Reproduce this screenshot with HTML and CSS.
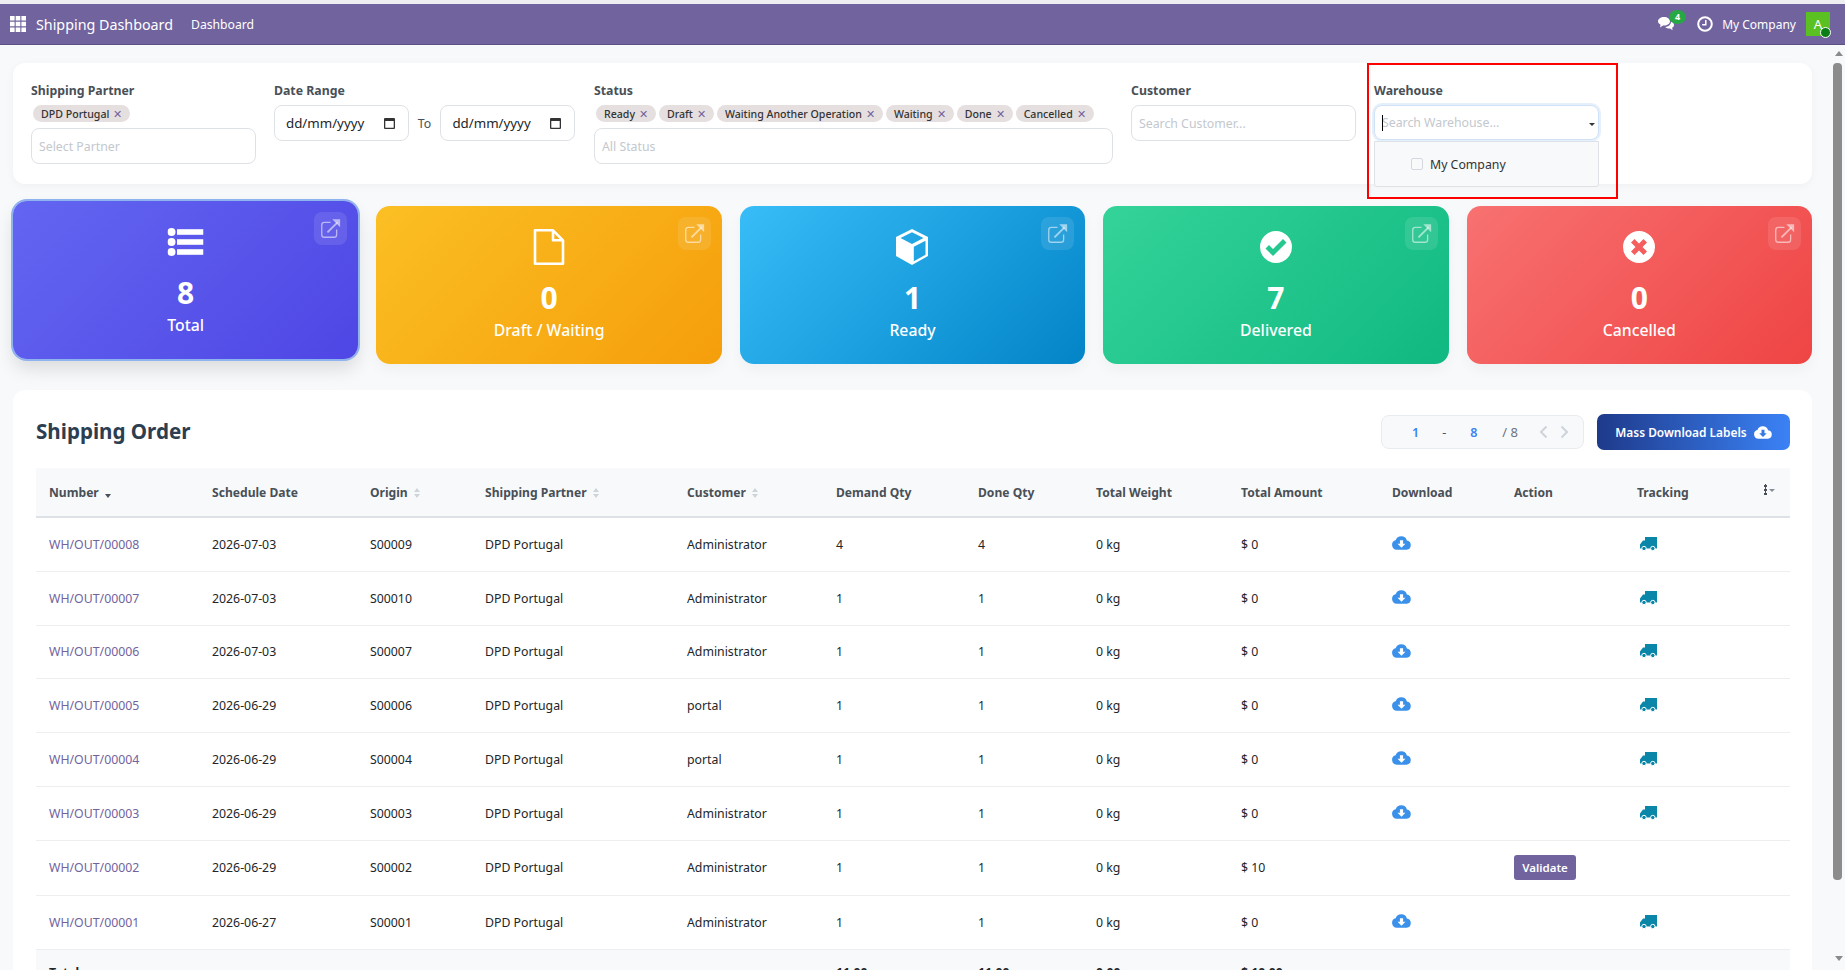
FILE: index.html
```html
<!DOCTYPE html>
<html lang="en">
<head>
    <meta charset="UTF-8">
    <title>Shipping Dashboard</title>
    <link rel="stylesheet" href="styles.css">
</head>
<body>

<svg class="sprite" aria-hidden="true">
    <symbol id="i-ext" viewBox="0 0 24 24"><path d="M19 13v6a3 3 0 0 1-3 3H5a3 3 0 0 1-3-3V8a3 3 0 0 1 3-3h7" fill="none" stroke="currentColor" stroke-width="1.500"/><path d="M8.500 16.500L20 5" fill="none" stroke="currentColor" stroke-width="2.200"/><path d="M14 1.500h9v9z" fill="currentColor"/></symbol>
    <symbol id="i-list" viewBox="0 0 36 28"><circle cx="4" cy="4" r="4"/><circle cx="4" cy="14" r="4"/><circle cx="4" cy="24" r="4"/><rect x="9.500" y="1.200" width="26.500" height="5.600"/><rect x="9.500" y="11.200" width="26.500" height="5.600"/><rect x="9.500" y="21.200" width="26.500" height="5.600"/></symbol>
    <symbol id="i-file" viewBox="0 0 32 36"><path d="M2 1.300h18l10 10v23.400H2zM20 1.300v10h10" fill="none" stroke="currentColor" stroke-width="2.600" stroke-linejoin="round"/></symbol>
    <symbol id="i-cube" viewBox="0 0 34 36"><path fill-rule="evenodd" d="M17 0l16 8v19l-16 9-16-9V8zM17 3.200L5.500 9 17 15l11.500-6zM18.800 17.800v14.500l11.700-6.600V11.700z"/></symbol>
    <symbol id="i-check" viewBox="0 0 32 32"><path fill-rule="evenodd" d="M16 0a16 16 0 1 0 0 32a16 16 0 1 0 0-32zM13 25l-7.500-7.500L9 14l4 4L23 8l3.500 3.500z"/></symbol>
    <symbol id="i-times" viewBox="0 0 32 32"><path fill-rule="evenodd" d="M16 0a16 16 0 1 0 0 32a16 16 0 1 0 0-32zM16 12.500L20.500 8l3.500 3.500-4.500 4.500 4.500 4.500-3.500 3.500-4.500-4.500-4.500 4.500L8 20.500l4.500-4.500L8 11.500 11.500 8z"/></symbol>
    <symbol id="i-cloud" viewBox="0 0 24 18"><path fill-rule="evenodd" d="M6 18A6 6 0 0 1 4.600 6.200 7.500 7.500 0 0 1 18.800 6.500 5.800 5.800 0 0 1 18.500 18zM10 6v4.500H7l5 5 5-5h-3V6z"/></symbol>
    <symbol id="i-truck" viewBox="0 0 17 14"><path d="M5 0h12v11.500H5zM0 11.500V7.500L3 3.500h2v8z"/><circle cx="4" cy="11.500" r="2.200" stroke="#fff" stroke-width="1"/><circle cx="12.800" cy="11.500" r="2.200" stroke="#fff" stroke-width="1"/></symbol>
</svg>

<div class="top-strip"></div>

<header class="navbar">
    <svg class="apps" width="16" height="16" viewBox="0 0 16 16"><path d="M0 0h4.600v4.600H0zM5.700 0h4.600v4.600H5.700zM11.400 0H16v4.600h-4.600zM0 5.700h4.600v4.600H0zM5.700 5.700h4.600v4.600H5.700zM11.400 5.700H16v4.600h-4.600zM0 11.400h4.600V16H0zM5.700 11.400h4.600V16H5.700zM11.400 11.400H16V16h-4.600z"/></svg>
    <span class="brand">Shipping Dashboard</span>
    <a class="nav-link">Dashboard</a>
    <div class="nav-right">
        <span class="msgs">
            <svg width="16" height="14" viewBox="0 0 16 14"><path d="M6 0c3.300 0 6 1.900 6 4.300S9.300 8.600 6 8.600l-1-.1L2 10.500l.6-2.800C1 7 0 5.700 0 4.300 0 1.900 2.700 0 6 0z"/><path d="M13 4.500c1.800.6 3 1.900 3 3.400 0 1.200-.7 2.200-1.900 2.900l.5 2.400-2.500-1.700c-2 .1-3.800-.5-4.800-1.600 3 0 5.700-2.200 5.700-5.400z"/></svg>
            <b class="msgs-count">4</b>
        </span>
        <svg class="clock" width="16" height="16" viewBox="0 0 16 16"><circle cx="8" cy="8" r="6.800" fill="none" stroke="#fff" stroke-width="2"/><path d="M8.800 4v4.800H5.200" fill="none" stroke="#fff" stroke-width="1.500"/></svg>
        <span class="company">My Company</span>
        <span class="avatar">A<i class="avatar-dot"></i></span>
    </div>
</header>

<div class="page">
    <main class="content">

        <section class="filters">
            <div class="field field-partner">
                <label>Shipping Partner</label>
                <div class="tags">
                    <span class="tag">DPD Portugal <i>&#10005;</i></span>
                </div>
                <input type="text" placeholder="Select Partner">
            </div>
            <div class="field field-date">
                <label>Date Range</label>
                <div class="date-row">
                    <div class="date-box">dd/mm/yyyy
                        <svg width="11" height="12" viewBox="0 0 11 12"><path fill-rule="evenodd" d="M1 1h9a1 1 0 0 1 1 1v9a1 1 0 0 1-1 1H1a1 1 0 0 1-1-1V2a1 1 0 0 1 1-1zM1.300 4v6.700h8.400V4z"/></svg>
                    </div>
                    <span class="to">To</span>
                    <div class="date-box">dd/mm/yyyy
                        <svg width="11" height="12" viewBox="0 0 11 12"><path fill-rule="evenodd" d="M1 1h9a1 1 0 0 1 1 1v9a1 1 0 0 1-1 1H1a1 1 0 0 1-1-1V2a1 1 0 0 1 1-1zM1.300 4v6.700h8.400V4z"/></svg>
                    </div>
                </div>
            </div>
            <div class="field field-status">
                <label>Status</label>
                <div class="tags">
                    <span class="tag">Ready <i>&#10005;</i></span>
                    <span class="tag">Draft <i>&#10005;</i></span>
                    <span class="tag">Waiting Another Operation <i>&#10005;</i></span>
                    <span class="tag">Waiting <i>&#10005;</i></span>
                    <span class="tag">Done <i>&#10005;</i></span>
                    <span class="tag">Cancelled <i>&#10005;</i></span>
                </div>
                <input type="text" placeholder="All Status">
            </div>
            <div class="field">
                <label>Customer</label>
                <input type="text" placeholder="Search Customer...">
            </div>
            <div class="field field-warehouse">
                <label>Warehouse</label>
                <div class="wh-input">
                    <i class="caret-line"></i>
                    <input type="text" placeholder="Search Warehouse...">
                    <i class="wh-arrow"></i>
                </div>
                <div class="wh-menu">
                    <span class="check"></span>
                    <span>My Company</span>
                </div>
                <div class="red-box"></div>
            </div>
        </section>

        <section class="stats">
            <div class="stat stat-total">
                <span class="stat-link"><svg width="21" height="21"><use href="#i-ext"/></svg></span>
                <svg class="stat-icon" width="37" height="36" viewBox="0 -4 36 36"><use href="#i-list" width="36" height="28" y="0"/></svg>
                <div class="stat-num">8</div>
                <div class="stat-label">Total</div>
            </div>
            <div class="stat stat-draft">
                <span class="stat-link"><svg width="21" height="21"><use href="#i-ext"/></svg></span>
                <svg class="stat-icon" width="32" height="36"><use href="#i-file"/></svg>
                <div class="stat-num">0</div>
                <div class="stat-label">Draft / Waiting</div>
            </div>
            <div class="stat stat-ready">
                <span class="stat-link"><svg width="21" height="21"><use href="#i-ext"/></svg></span>
                <svg class="stat-icon" width="34" height="36"><use href="#i-cube"/></svg>
                <div class="stat-num">1</div>
                <div class="stat-label">Ready</div>
            </div>
            <div class="stat stat-done">
                <span class="stat-link"><svg width="21" height="21"><use href="#i-ext"/></svg></span>
                <svg class="stat-icon icon-round" width="32" height="32"><use href="#i-check"/></svg>
                <div class="stat-num">7</div>
                <div class="stat-label">Delivered</div>
            </div>
            <div class="stat stat-cancel">
                <span class="stat-link"><svg width="21" height="21"><use href="#i-ext"/></svg></span>
                <svg class="stat-icon icon-round" width="32" height="32"><use href="#i-times"/></svg>
                <div class="stat-num">0</div>
                <div class="stat-label">Cancelled</div>
            </div>
        </section>

        <section class="orders">
            <div class="orders-top">
                <h2>Shipping Order</h2>
                <div class="pager">
                    <span class="pg-num pg-a">1</span>
                    <span class="pg-dash">-</span>
                    <span class="pg-num pg-b">8</span>
                    <span class="pg-total">/ 8</span>
                    <span class="pg-arrows">
                        <svg width="9" height="14" viewBox="0 0 9 14"><path d="M7.500 1.500L2 7l5.500 5.500" fill="none" stroke="#ced4da" stroke-width="2"/></svg>
                        <svg width="9" height="14" viewBox="0 0 9 14"><path d="M1.500 1.500L7 7l-5.500 5.500" fill="none" stroke="#ced4da" stroke-width="2"/></svg>
                    </span>
                </div>
                <button class="mass-btn">Mass Download Labels
                    <svg width="18" height="14"><use href="#i-cloud"/></svg>
                </button>
            </div>

            <table class="orders-table">
                <colgroup>
                    <col class="c-number"><col class="c-date"><col class="c-origin"><col class="c-partner">
                    <col class="c-customer"><col class="c-demand"><col class="c-done"><col class="c-weight">
                    <col class="c-amount"><col class="c-download"><col class="c-action"><col class="c-tracking"><col>
                </colgroup>
                <thead>
                    <tr>
                        <th>Number <i class="sort-down"></i></th>
                        <th>Schedule Date</th>
                        <th>Origin <i class="sort"></i></th>
                        <th>Shipping Partner <i class="sort"></i></th>
                        <th>Customer <i class="sort"></i></th>
                        <th>Demand Qty</th>
                        <th>Done Qty</th>
                        <th>Total Weight</th>
                        <th>Total Amount</th>
                        <th>Download</th>
                        <th>Action</th>
                        <th>Tracking</th>
                        <th class="opt"><span class="opt-dots"></span><i class="opt-caret"></i></th>
                    </tr>
                </thead>
                <tbody>
                    <tr>
                        <td><a>WH/OUT/00008</a></td><td>2026-07-03</td><td>S00009</td><td>DPD Portugal</td><td>Administrator</td><td>4</td><td>4</td><td>0 kg</td><td>$ 0</td>
                        <td><svg class="dl" width="19" height="15"><use href="#i-cloud"/></svg></td><td></td>
                        <td><svg class="trk" width="17" height="14"><use href="#i-truck"/></svg></td><td></td>
                    </tr>
                    <tr>
                        <td><a>WH/OUT/00007</a></td><td>2026-07-03</td><td>S00010</td><td>DPD Portugal</td><td>Administrator</td><td>1</td><td>1</td><td>0 kg</td><td>$ 0</td>
                        <td><svg class="dl" width="19" height="15"><use href="#i-cloud"/></svg></td><td></td>
                        <td><svg class="trk" width="17" height="14"><use href="#i-truck"/></svg></td><td></td>
                    </tr>
                    <tr class="row-short">
                        <td><a>WH/OUT/00006</a></td><td>2026-07-03</td><td>S00007</td><td>DPD Portugal</td><td>Administrator</td><td>1</td><td>1</td><td>0 kg</td><td>$ 0</td>
                        <td><svg class="dl" width="19" height="15"><use href="#i-cloud"/></svg></td><td></td>
                        <td><svg class="trk" width="17" height="14"><use href="#i-truck"/></svg></td><td></td>
                    </tr>
                    <tr>
                        <td><a>WH/OUT/00005</a></td><td>2026-06-29</td><td>S00006</td><td>DPD Portugal</td><td>portal</td><td>1</td><td>1</td><td>0 kg</td><td>$ 0</td>
                        <td><svg class="dl" width="19" height="15"><use href="#i-cloud"/></svg></td><td></td>
                        <td><svg class="trk" width="17" height="14"><use href="#i-truck"/></svg></td><td></td>
                    </tr>
                    <tr>
                        <td><a>WH/OUT/00004</a></td><td>2026-06-29</td><td>S00004</td><td>DPD Portugal</td><td>portal</td><td>1</td><td>1</td><td>0 kg</td><td>$ 0</td>
                        <td><svg class="dl" width="19" height="15"><use href="#i-cloud"/></svg></td><td></td>
                        <td><svg class="trk" width="17" height="14"><use href="#i-truck"/></svg></td><td></td>
                    </tr>
                    <tr>
                        <td><a>WH/OUT/00003</a></td><td>2026-06-29</td><td>S00003</td><td>DPD Portugal</td><td>Administrator</td><td>1</td><td>1</td><td>0 kg</td><td>$ 0</td>
                        <td><svg class="dl" width="19" height="15"><use href="#i-cloud"/></svg></td><td></td>
                        <td><svg class="trk" width="17" height="14"><use href="#i-truck"/></svg></td><td></td>
                    </tr>
                    <tr class="row-validate">
                        <td><a>WH/OUT/00002</a></td><td>2026-06-29</td><td>S00002</td><td>DPD Portugal</td><td>Administrator</td><td>1</td><td>1</td><td>0 kg</td><td>$ 10</td>
                        <td></td><td><button class="validate">Validate</button></td>
                        <td></td><td></td>
                    </tr>
                    <tr>
                        <td><a>WH/OUT/00001</a></td><td>2026-06-27</td><td>S00001</td><td>DPD Portugal</td><td>Administrator</td><td>1</td><td>1</td><td>0 kg</td><td>$ 0</td>
                        <td><svg class="dl" width="19" height="15"><use href="#i-cloud"/></svg></td><td></td>
                        <td><svg class="trk" width="17" height="14"><use href="#i-truck"/></svg></td><td></td>
                    </tr>
                </tbody>
                <tfoot>
                    <tr>
                        <td>Total</td><td></td><td></td><td></td><td></td><td>11.00</td><td>11.00</td><td>0.00</td><td>$ 10.00</td><td></td><td></td><td></td><td></td>
                    </tr>
                </tfoot>
            </table>
        </section>
    </main>

    <aside class="scrollbar">
        <i class="sb-up"></i>
        <div class="sb-thumb"></div>
        <i class="sb-down"></i>
    </aside>
</div>

</body>
</html>
```
FILE: styles.css
```css
* {
    box-sizing: border-box;
}
html, body {
    height: 100%;
}
body {
    margin: 0;
    overflow: hidden;
    display: flex;
    flex-direction: column;
    font-family: "Noto Sans", sans-serif;
    font-size: 12.3px;
    color: #212529;
    background: #f8f9fa;
}
.sprite {
    display: none;
}
.top-strip {
    height: 4px;
    background: #eeeef2;
}

/* navbar */
.navbar {
    height: 41px;
    flex-shrink: 0;
    display: flex;
    align-items: center;
    padding-left: 10px;
    background: #71639e;
    border-bottom: 1px solid #5d5285;
    color: #fff;
}
.apps {
    fill: #fff;
}
.brand {
    margin-left: 10px;
    font-size: 14.3px;
}
.nav-link {
    margin-left: 18px;
    font-size: 12.2px;
}
.nav-right {
    margin-left: auto;
    display: flex;
    align-items: center;
    padding-right: 15px;
}
.msgs {
    position: relative;
    display: flex;
    margin-right: 23px;
}
.msgs svg {
    fill: #fff;
}
.msgs-count {
    position: absolute;
    left: 11px;
    top: -7px;
    width: 17px;
    height: 14px;
    border-radius: 50%;
    background: #28a745;
    font-size: 9px;
    line-height: 14px;
    text-align: center;
}
.clock {
    margin-right: 9px;
}
.company {
    font-size: 12px;
    margin-right: 10px;
}
.avatar {
    position: relative;
    width: 24px;
    height: 24px;
    background: #5bc122;
    text-align: center;
    line-height: 24px;
    font-size: 13px;
}
.avatar-dot {
    position: absolute;
    right: -1px;
    bottom: -2px;
    width: 11px;
    height: 11px;
    border-radius: 50%;
    background: #0a7d16;
    border: 1px solid #fff;
}

/* page */
.page {
    flex: 1;
    min-height: 0;
    display: flex;
}
.content {
    flex: 1;
    min-width: 0;
    overflow: hidden;
    padding: 18px 20px 0 13px;
}
.scrollbar {
    width: 13px;
    flex-shrink: 0;
    display: flex;
    flex-direction: column;
    align-items: center;
    padding-top: 6px;
    background: #f8f9fa;
}
.sb-up, .sb-down {
    width: 0;
    height: 0;
    border-left: 4px solid transparent;
    border-right: 4px solid transparent;
}
.sb-up {
    border-bottom: 5px solid #8a8a8a;
}
.sb-down {
    margin-top: 76px;
    border-top: 5px solid #8a8a8a;
}
.sb-thumb {
    width: 9px;
    height: 817px;
    margin-top: 7px;
    margin-right: 3px;
    border-radius: 4px;
    background: #8c8c8c;
}

/* filters */
.filters {
    display: flex;
    gap: 18px;
    height: 121px;
    padding: 18px;
    background: #fff;
    border-radius: 12px;
    box-shadow: 0 2px 8px rgba(0,0,0,0.04);
}
.field {
    position: relative;
    width: 225px;
    flex-shrink: 0;
}
.field label {
    display: block;
    height: 18px;
    margin-bottom: 6px;
    font-size: 12.3px;
    line-height: 20px;
    font-weight: 700;
    color: #495057;
}
.field input {
    display: block;
    width: 100%;
    height: 36px;
    padding: 0 7px;
    border: 1px solid #dee2e6;
    border-radius: 8px;
    background: #fff;
    font-family: inherit;
    font-size: 12.3px;
    outline: none;
}
.field input::placeholder {
    color: #c3c8ce;
    opacity: 1;
}
.field-date {
    width: 301px;
}
.field-status {
    width: 519px;
    margin-left: 1px;
}
.tags {
    display: flex;
    gap: 3px;
    height: 17px;
    margin: 3px 0 6px 2px;
}
.tag {
    display: flex;
    align-items: center;
    gap: 4px;
    height: 17px;
    padding: 0 8px;
    border-radius: 9px;
    background: #e6dfdf;
    font-size: 10.6px;
    font-weight: 500;
    color: #333;
    white-space: nowrap;
}
.tag i {
    font-style: normal;
    font-size: 11px;
    color: #71639e;
}
.date-row {
    display: flex;
    align-items: center;
}
.date-box {
    width: 135px;
    height: 36px;
    display: flex;
    align-items: center;
    justify-content: space-between;
    padding: 0 13px 0 11px;
    border: 1px solid #dee2e6;
    border-radius: 8px;
    font-size: 13.3px;
}
.date-box svg {
    fill: #333;
}
.to {
    width: 32px;
    text-align: center;
    color: #495057;
}
.wh-input {
    position: relative;
}
.wh-input input {
    height: 35px;
    border-color: #cfe2f7;
    box-shadow: 0 0 0 2px #e6f0fb;
}
.caret-line {
    position: absolute;
    left: 8px;
    top: 10px;
    width: 1px;
    height: 16px;
    background: #000;
}
.wh-arrow {
    position: absolute;
    right: 4px;
    top: 18px;
    width: 0;
    height: 0;
    border-left: 3px solid transparent;
    border-right: 3px solid transparent;
    border-top: 3px solid #333;
}
.wh-menu {
    position: absolute;
    top: 60px;
    left: 0;
    right: 0;
    height: 46px;
    display: flex;
    align-items: center;
    gap: 7px;
    padding-left: 36px;
    background: #f8f9fa;
    border: 1px solid #dee2e6;
    border-radius: 0 0 3px 3px;
    z-index: 2;
    font-size: 12.3px;
    color: #333;
}
.check {
    width: 12px;
    height: 12px;
    border: 1px solid #d5d9de;
    border-radius: 2px;
    background: #f8f9fa;
}
.red-box {
    position: absolute;
    left: -7px;
    top: -18px;
    width: 251px;
    height: 136px;
    border: 2px solid #f00;
    z-index: 3;
}

/* stat cards */
.stats {
    display: grid;
    grid-template-columns: repeat(5, 1fr);
    gap: 18px;
    margin-top: 22px;
}
.stat {
    position: relative;
    height: 158px;
    padding-top: 23px;
    border-radius: 14px;
    text-align: center;
    color: #fff;
    box-shadow: 0 6px 14px rgba(0,0,0,0.04);
}
.stat-total {
    transform: translateY(-5px);
    background: linear-gradient(135deg, #6366f1, #4f46e5);
    box-shadow: 0 0 0 2px #8fb3ef, 0 10px 18px rgba(0,0,0,0.12);
}
.stat-draft {
    background: linear-gradient(135deg, #fbbf24, #f59e0b);
}
.stat-ready {
    background: linear-gradient(135deg, #38bdf8, #0284c7);
}
.stat-done {
    background: linear-gradient(135deg, #34d399, #10b981);
}
.stat-cancel {
    background: linear-gradient(135deg, #f87171, #ef4444);
}
.stat-link {
    position: absolute;
    top: 11px;
    right: 11px;
    width: 33px;
    height: 33px;
    display: flex;
    align-items: center;
    justify-content: center;
    border-radius: 8px;
    background: rgba(255,255,255,0.1);
    color: rgba(255,255,255,0.55);
}
.stat-icon {
    display: block;
    height: 36px;
    margin: 0 auto;
    fill: #fff;
    color: #fff;
}
.icon-round {
    height: 32px;
    margin: 2px auto 20px;
}
.stat-num {
    margin-top: 18px;
    font-size: 30px;
    line-height: 30px;
    font-weight: 700;
}
.stat-label {
    margin-top: 6px;
    font-size: 15.8px;
    line-height: 22px;
    font-weight: 500;
}

/* orders */
.orders {
    margin-top: 26px;
    padding: 24px 22px 0 23px;
    background: #fff;
    border-radius: 12px 12px 0 0;
}
.orders-top {
    display: flex;
    align-items: center;
    height: 36px;
    margin-bottom: 18px;
}
.orders-top h2 {
    margin: -2px auto 0 0;
    font-size: 20.6px;
    font-weight: 700;
    color: #2c3e50;
}
.pager {
    width: 203px;
    height: 34px;
    display: flex;
    align-items: center;
    margin-right: 13px;
    background: #f8f9fa;
    border: 1px solid #e9ecef;
    border-radius: 8px;
    font-size: 12.5px;
}
.pg-num {
    font-weight: 600;
    color: #3b82f6;
}
.pg-a {
    margin-left: 30px;
}
.pg-dash {
    margin-left: 23px;
    color: #495057;
}
.pg-b {
    margin-left: 24px;
}
.pg-total {
    margin-left: 25px;
    color: #6c757d;
    font-size: 13px;
}
.pg-arrows {
    display: flex;
    gap: 12px;
    margin-left: 21px;
}
.mass-btn {
    width: 193px;
    height: 36px;
    display: flex;
    align-items: center;
    justify-content: center;
    gap: 7px;
    border: none;
    border-radius: 7px;
    background: linear-gradient(90deg, #1e3a8a, #3b82f6);
    color: #fff;
    fill: #fff;
    font-family: inherit;
    font-size: 11.9px;
    font-weight: 600;
}

.orders-table {
    width: 100%;
    table-layout: fixed;
    border-collapse: collapse;
}
.c-number { width: 163px; }
.c-date { width: 158px; }
.c-origin { width: 115px; }
.c-partner { width: 202px; }
.c-customer { width: 149px; }
.c-demand { width: 142px; }
.c-done { width: 118px; }
.c-weight { width: 145px; }
.c-amount { width: 151px; }
.c-download { width: 122px; }
.c-action { width: 123px; }
.c-tracking { width: 127px; }

.orders-table th {
    height: 49px;
    padding: 1px 0 0 13px;
    text-align: left;
    font-size: 12.1px;
    font-weight: 700;
    color: #495057;
    background: #f8f9fa;
    border-bottom: 2px solid #dee2e6;
    white-space: nowrap;
}
.orders-table td {
    height: 54px;
    padding: 0 0 0 13px;
    border-bottom: 1px solid #eceef0;
    white-space: nowrap;
}
.orders-table td a {
    color: #71639e;
}
.row-short td {
    height: 53px;
}
.row-validate td {
    height: 55px;
}
.orders-table tfoot td {
    vertical-align: top;
    padding-top: 14px;
    font-weight: 700;
    background: #f8f9fa;
    border-bottom: none;
}
.dl {
    display: block;
    fill: #3b91ea;
    margin-top: -3px;
}
.trk {
    display: block;
    fill: #0a86a9;
    margin: -1px 0 0 3px;
}
.validate {
    height: 25px;
    width: 62px;
    padding: 0;
    border: none;
    border-radius: 3px;
    background: #71639e;
    color: #fff;
    font-family: inherit;
    font-size: 11.5px;
    font-weight: 600;
}
.sort, .sort-down {
    display: inline-block;
    position: relative;
    width: 7px;
    height: 10px;
    margin-left: 3px;
    vertical-align: -1px;
}
.sort::before, .sort::after, .sort-down::after {
    content: "";
    position: absolute;
    left: 0;
    border-left: 3.500px solid transparent;
    border-right: 3.500px solid transparent;
}
.sort::before {
    top: 0;
    border-bottom: 4px solid #ced4da;
}
.sort::after {
    bottom: 0;
    border-top: 4px solid #ced4da;
}
.sort-down::after {
    bottom: 0;
    border-top: 4px solid #495057;
}
.opt {
    position: relative;
}
.opt-dots {
    display: inline-block;
    width: 3px;
    height: 11px;
    vertical-align: 3px;
    background: radial-gradient(circle, #495057 1.500px, transparent 1.600px) 0 0 / 3px 4px;
}
.opt-caret {
    display: inline-block;
    width: 0;
    height: 0;
    margin-left: 2px;
    vertical-align: 6px;
    border-left: 3px solid transparent;
    border-right: 3px solid transparent;
    border-top: 3px solid #868e96;
}
```
